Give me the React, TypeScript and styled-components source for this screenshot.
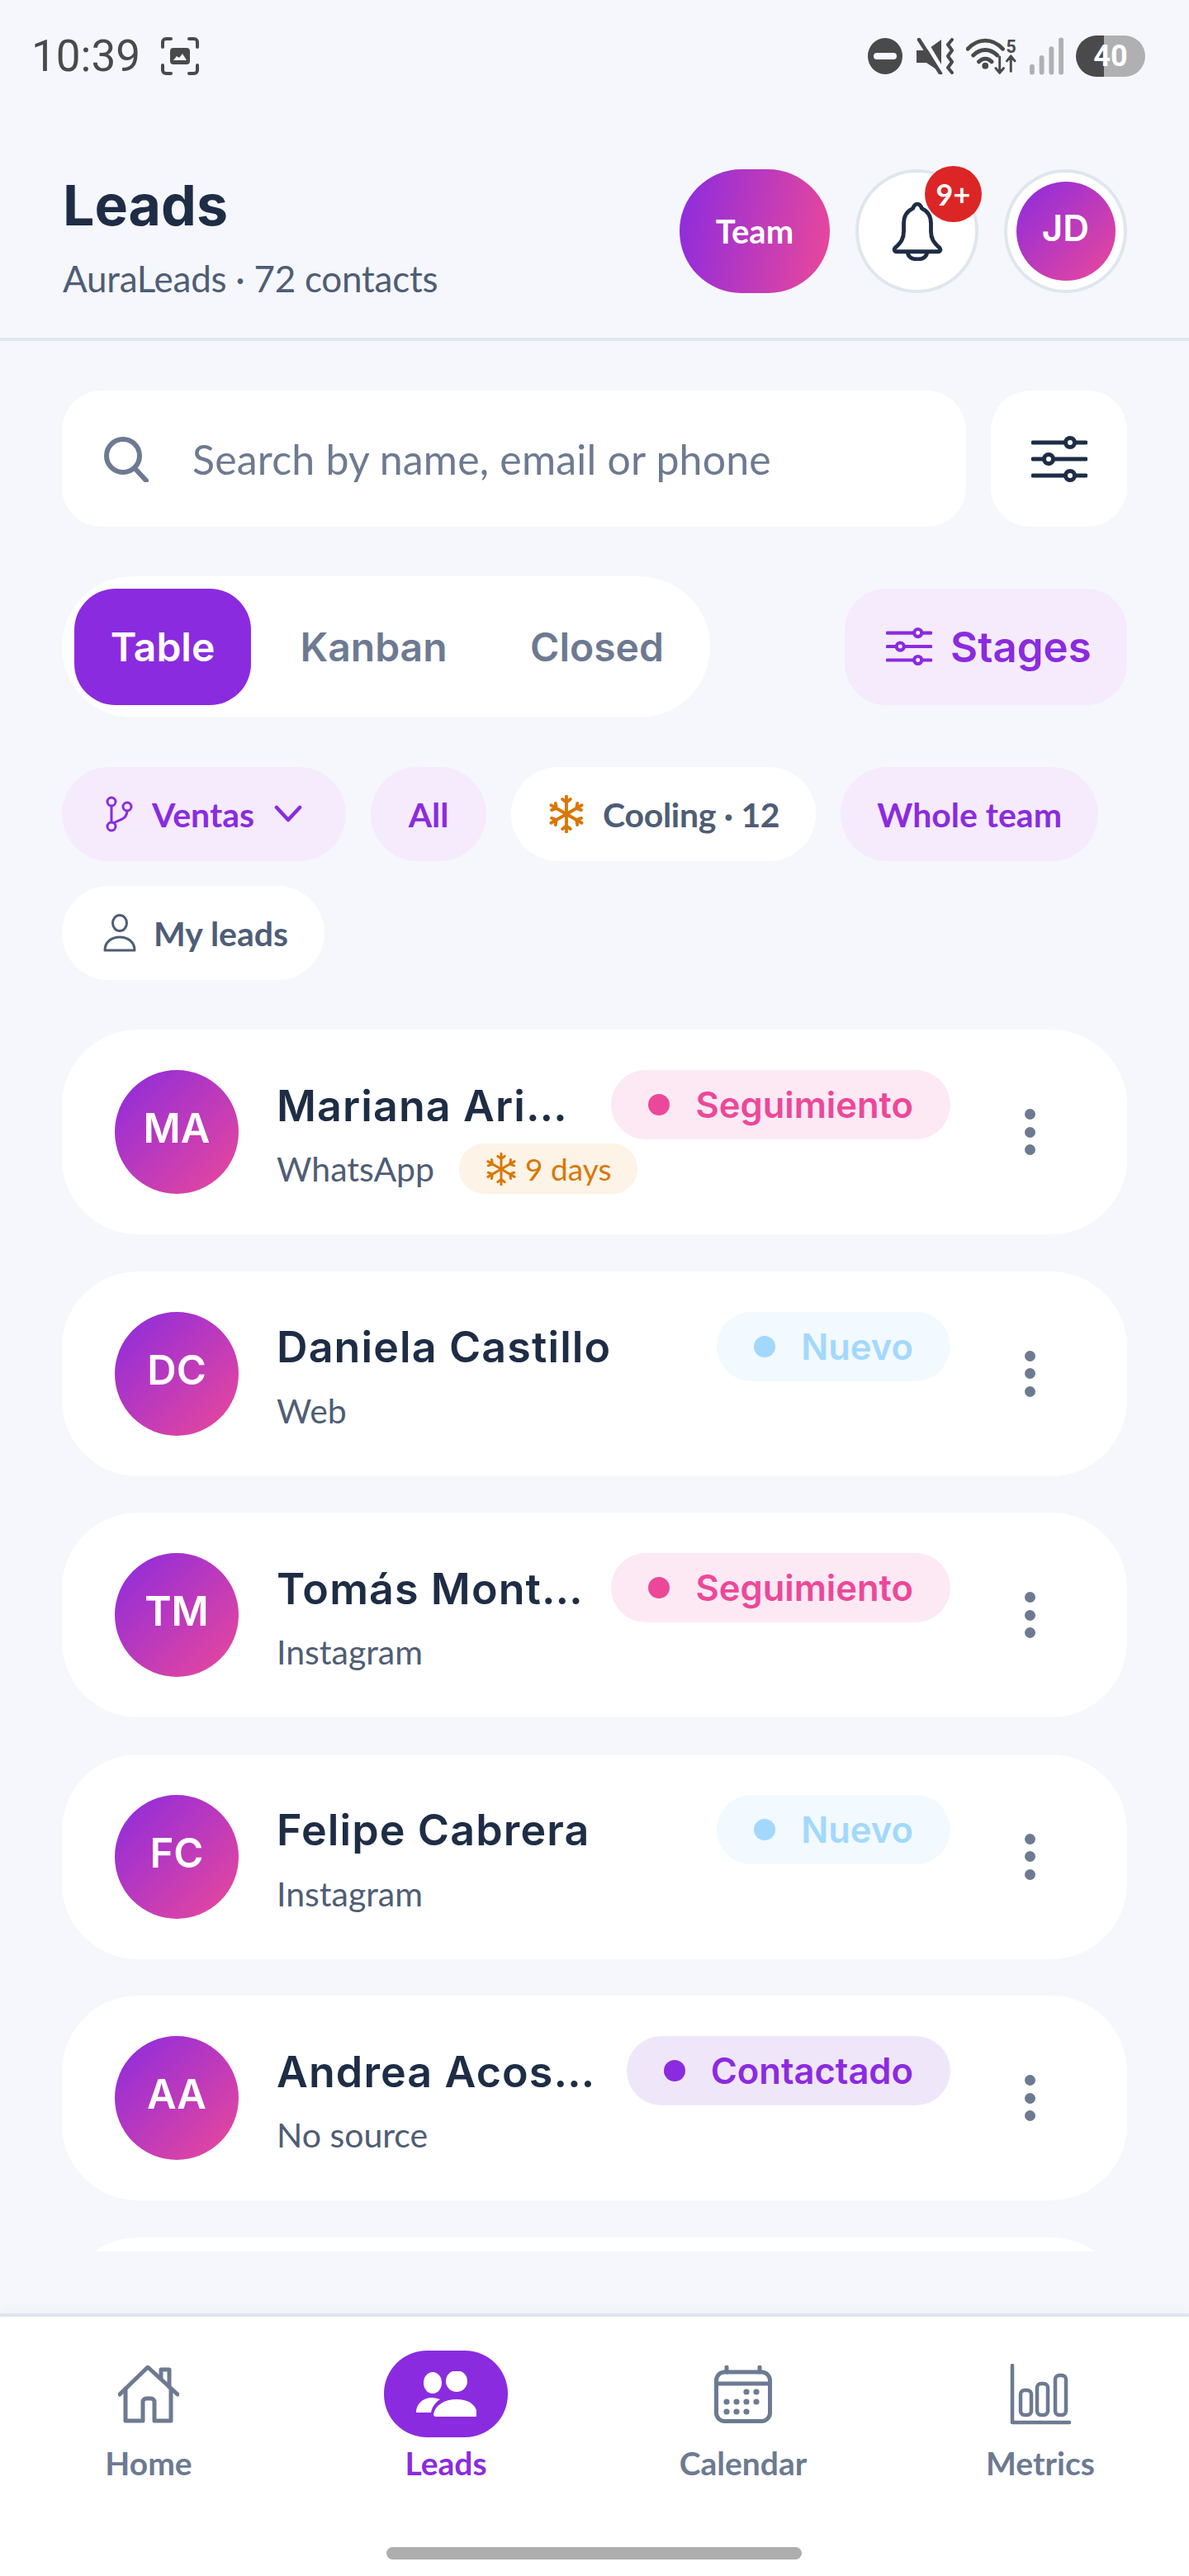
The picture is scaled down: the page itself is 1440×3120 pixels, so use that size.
import React from 'react';
import styled, { createGlobalStyle } from 'styled-components';

const PURPLE = '#8b2bdf';
const PINK = '#ec4899';
const INK = '#1e2d45';
const SLATE = '#4f5d75';
const MUTED = '#6d7a91';
const AMBER = '#d97706';
const DISPLAY = '"Inter", "Liberation Sans", sans-serif';
const BODY = '"Lato", "Liberation Sans", sans-serif';

const GlobalStyle = createGlobalStyle`
  html, body {
    margin: 0;
    padding: 0;
    background: #f5f7fc;
  }
  * {
    box-sizing: border-box;
  }
`;

const Screen = styled.div`
  width: 1440px;
  height: 3120px;
  display: flex;
  flex-direction: column;
  background: #f5f7fc;
  font-family: ${BODY};
  overflow: hidden;
`;

const StatusBar = styled.div`
  height: 136px;
  flex-shrink: 0;
  display: flex;
  align-items: center;
  justify-content: space-between;
  padding: 0 53px 0 38px;
  color: #4a4a4c;
`;

const StatusLeft = styled.div`
  display: flex;
  align-items: center;
  gap: 24px;
`;

const Clock = styled.span`
  font-family: "Roboto", sans-serif;
  font-size: 53px;
  line-height: 1;
`;

const StatusRight = styled.div`
  display: flex;
  align-items: center;
`;

const Battery = styled.div`
  width: 84px;
  height: 50px;
  margin-left: 15px;
  border-radius: 25px;
  background: linear-gradient(90deg, #4a4a4c 0 40%, #b0b0b3 40% 100%);
  color: #fff;
  font-family: "Roboto", sans-serif;
  font-weight: 700;
  font-size: 36px;
  display: flex;
  align-items: center;
  justify-content: center;
`;

const Header = styled.header`
  height: 277px;
  flex-shrink: 0;
  display: flex;
  justify-content: space-between;
  padding: 69px 75px 0 76px;
  border-bottom: 4px solid #e0e6ee;
`;

const TitleBlock = styled.div`
  padding-top: 3px;
`;

const Title = styled.h1`
  margin: 0;
  font-family: ${DISPLAY};
  font-weight: 700;
  font-size: 68px;
  line-height: 80px;
  color: ${INK};
`;

const Subtitle = styled.p`
  margin: 19px 0 0;
  font-size: 44px;
  line-height: 60px;
  letter-spacing: -0.26px;
  color: ${SLATE};
`;

const HeaderActions = styled.div`
  display: flex;
  align-items: flex-start;
  gap: 31px;
`;

const TeamButton = styled.button`
  width: 182px;
  height: 150px;
  border: 0;
  border-radius: 75px;
  background: linear-gradient(100deg, ${PURPLE}, ${PINK});
  color: #fff;
  font-family: ${BODY};
  font-weight: 700;
  font-size: 40px;
`;

const RoundButton = styled.div`
  position: relative;
  width: 149px;
  height: 150px;
  border-radius: 50%;
  border: 4px solid #e0e6ee;
  background: #fff;
  display: flex;
  align-items: center;
  justify-content: center;
`;

const CountBadge = styled.span`
  position: absolute;
  top: -8px;
  right: -8px;
  width: 69px;
  height: 68px;
  border-radius: 50%;
  background: #dc2626;
  color: #fff;
  font-size: 36px;
  font-weight: 700;
  display: flex;
  align-items: center;
  justify-content: center;
`;

const Avatar = styled.div<{ $size: number; $font: number }>`
  width: ${(p) => p.$size}px;
  height: ${(p) => p.$size}px;
  flex-shrink: 0;
  padding-bottom: 9px;
  border-radius: 50%;
  background: linear-gradient(135deg, ${PURPLE}, ${PINK});
  color: #fff;
  font-family: ${DISPLAY};
  font-weight: 600;
  font-size: ${(p) => p.$font}px;
  display: flex;
  align-items: center;
  justify-content: center;
`;

const Main = styled.main`
  flex: 1;
  min-height: 0;
  display: flex;
  flex-direction: column;
  gap: 60px;
  padding: 60px 75px 75px;
`;

const SearchRow = styled.div`
  display: flex;
  gap: 30px;
`;

const SearchBox = styled.div`
  flex: 1;
  height: 165px;
  border-radius: 48px;
  background: #fff;
  display: flex;
  align-items: center;
  gap: 52px;
  padding-left: 50px;
`;

const Placeholder = styled.span`
  font-size: 50px;
  letter-spacing: 0.2px;
  color: ${MUTED};
`;

const FilterButton = styled.div`
  width: 165px;
  height: 165px;
  border-radius: 48px;
  background: #fff;
  display: flex;
  align-items: center;
  justify-content: center;
`;

const ViewRow = styled.div`
  display: flex;
  align-items: center;
  justify-content: space-between;
`;

const Tabs = styled.div`
  width: 785px;
  height: 171px;
  padding: 15px;
  border-radius: 86px;
  background: #fff;
  display: flex;
  align-items: center;
`;

const Tab = styled.div<{ $active?: boolean; $width: number }>`
  width: ${(p) => p.$width}px;
  height: 141px;
  border-radius: 50px;
  background: ${(p) => (p.$active ? PURPLE : 'transparent')};
  color: ${(p) => (p.$active ? '#fff' : MUTED)};
  font-family: ${DISPLAY};
  font-weight: 600;
  font-size: 48px;
  display: flex;
  align-items: center;
  justify-content: center;
`;

const StagesButton = styled.div`
  width: 342px;
  height: 141px;
  border-radius: 50px;
  background: #f5ebfd;
  color: ${PURPLE};
  font-family: ${DISPLAY};
  font-weight: 600;
  font-size: 51px;
  display: flex;
  align-items: center;
  gap: 22px;
  padding-left: 50px;
`;

const ChipWrap = styled.div`
  display: flex;
  flex-wrap: wrap;
  gap: 30px;
`;

const Chip = styled.div<{ $active?: boolean }>`
  height: 114px;
  min-width: 140px;
  padding: 0 44px;
  border-radius: 57px;
  background: ${(p) => (p.$active ? '#f5ebfd' : '#fff')};
  color: ${(p) => (p.$active ? PURPLE : SLATE)};
  font-weight: 700;
  font-size: 41px;
  display: flex;
  align-items: center;
  justify-content: center;
  gap: 21px;
`;

const CoolingLabel = styled.span`
  letter-spacing: -0.3px;
`;

const LeadList = styled.div`
  flex: 1;
  min-height: 0;
  overflow: hidden;
  display: flex;
  flex-direction: column;
  gap: 44.6px;
`;

const LeadCard = styled.article`
  flex-shrink: 0;
  height: 248px;
  padding: 49px 110px 49px 64px;
  border-radius: 92px;
  background: #fff;
  display: flex;
  align-items: center;
`;

const LeadBody = styled.div`
  flex: 1;
  min-width: 0;
  margin: 0 90px 0 46px;
`;

const TopLine = styled.div`
  height: 84px;
  display: flex;
  align-items: center;
  justify-content: space-between;
`;

const LeadName = styled.div`
  padding-top: 2px;
  font-family: ${DISPLAY};
  font-weight: 600;
  font-size: 52px;
  letter-spacing: 1.1px;
  color: ${INK};
  white-space: nowrap;
`;

const stageColors = {
  follow: { bg: '#fce9f4', fg: PINK },
  fresh: { bg: '#f2f9ff', fg: '#a3d8fd' },
  contacted: { bg: '#f0e6fa', fg: PURPLE },
};

type Stage = keyof typeof stageColors;

const StageBadge = styled.div<{ $stage: Stage }>`
  flex-shrink: 0;
  height: 84px;
  padding: 0 45px;
  border-radius: 42px;
  background: ${(p) => stageColors[p.$stage].bg};
  color: ${(p) => stageColors[p.$stage].fg};
  font-family: ${DISPLAY};
  font-weight: 600;
  font-size: 43.5px;
  display: flex;
  align-items: center;
  gap: 31px;

  &::before {
    content: '';
    width: 26px;
    height: 26px;
    border-radius: 50%;
    background: currentColor;
  }
`;

const SubLine = styled.div`
  height: 61px;
  margin-top: 5px;
  display: flex;
  align-items: center;
  gap: 30px;
  font-size: 41px;
  color: ${SLATE};
`;

const CoolingTag = styled.span`
  height: 61px;
  padding: 0 32px 0 31px;
  border-radius: 31px;
  background: #fdf3e6;
  color: ${AMBER};
  font-size: 37px;
  display: flex;
  align-items: center;
  gap: 9px;
`;

const MenuDots = styled.div`
  width: 14px;
  flex-shrink: 0;
  display: flex;
  flex-direction: column;
  gap: 8.5px;

  span {
    width: 13px;
    height: 13px;
    border-radius: 50%;
    background: ${MUTED};
  }
`;

const BottomNav = styled.nav`
  position: relative;
  height: 318px;
  flex-shrink: 0;
  border-top: 4px solid #e0e6ee;
  background: #fff;
  box-shadow: 0 -6px 12px rgba(30, 45, 69, 0.025);
  display: grid;
  grid-template-columns: repeat(4, 360px);
`;

const NavItem = styled.div<{ $active?: boolean }>`
  display: flex;
  flex-direction: column;
  align-items: center;
  padding-top: 41px;
  color: ${(p) => (p.$active ? PURPLE : MUTED)};
  font-weight: 700;
  font-size: 39px;
`;

const NavIcon = styled.div<{ $active?: boolean }>`
  width: 150px;
  height: 105px;
  border-radius: 52px;
  background: ${(p) => (p.$active ? PURPLE : 'transparent')};
  display: flex;
  align-items: center;
  justify-content: center;
  margin-bottom: 8px;
`;

const HomeIndicator = styled.div`
  position: absolute;
  left: 468px;
  bottom: 20px;
  width: 503px;
  height: 15px;
  border-radius: 8px;
  background: #aeaeae;
`;

const ScreenshotIcon = () => (
  <svg width="48" height="48" viewBox="0 0 48 48" fill="none">
    <path
      d="M3 13V7a4 4 0 0 1 4-4h6M35 3h6a4 4 0 0 1 4 4v6M3 35v6a4 4 0 0 0 4 4h6M35 45h6a4 4 0 0 0 4-4v-6"
      stroke="#4a4a4c"
      strokeWidth="4"
      strokeLinecap="round"
    />
    <rect x="12" y="14" width="24" height="20" rx="4" fill="#4a4a4c" />
    <path d="M16 29l4-5 3 2 4-5 5 8z" fill="#f5f7fc" />
  </svg>
);

const DndIcon = () => (
  <svg width="42" height="44" viewBox="0 0 42 44">
    <ellipse cx="21" cy="22" rx="21" ry="22" fill="#4a4a4c" />
    <rect x="7" y="18" width="28" height="8" rx="4" fill="#f5f7fc" />
  </svg>
);

const MuteIcon = () => (
  <svg width="46" height="44" viewBox="0 0 46 44" fill="none" style={{ marginLeft: 17 }}>
    <path d="M0 15h12L30 2v40L12 30H0z" fill="#4a4a4c" />
    <path d="M8 0l24 40" stroke="#f5f7fc" strokeWidth="5" />
    <path d="M3 2l26 41" stroke="#4a4a4c" strokeWidth="4.500" strokeLinecap="round" />
    <path
      d="M43 2l-5 6 5 7-5 7 5 7-5 7 5 6"
      stroke="#4a4a4c"
      strokeWidth="4"
      strokeLinecap="round"
      strokeLinejoin="round"
    />
  </svg>
);

const WifiIcon = () => (
  <svg width="62" height="46" viewBox="0 0 64 46" fill="none" style={{ marginLeft: 14 }}>
    <path
      d="M2 14c13-14 31-14 44 0M9 22c9-9 21-9 30 0M16 30c5-5 11-5 16 0"
      stroke="#4a4a4c"
      strokeWidth="5"
      strokeLinecap="round"
    />
    <circle cx="24" cy="35" r="4" fill="#4a4a4c" />
    <path
      d="M42 24v20m-5-6l5 6 5-6M56 42V23m-5 6l5-6 5 6"
      stroke="#4a4a4c"
      strokeWidth="3"
      strokeLinecap="round"
      strokeLinejoin="round"
    />
    <text x="50" y="19" fontFamily="Roboto, sans-serif" fontWeight="700" fontSize="22" fill="#4a4a4c">5</text>
  </svg>
);

const SignalIcon = () => (
  <svg width="41" height="46" viewBox="0 0 42 46" style={{ marginLeft: 15 }}>
    <rect x="0" y="33" width="6" height="13" rx="3" fill="#b0b0b3" />
    <rect x="12" y="22" width="6" height="24" rx="3" fill="#b0b0b3" />
    <rect x="24" y="11" width="6" height="35" rx="3" fill="#b0b0b3" />
    <rect x="36" y="0" width="6" height="46" rx="3" fill="#b0b0b3" />
  </svg>
);

const BellIcon = () => (
  <svg width="62" height="72" viewBox="0 0 64 74" fill="none" stroke={INK} strokeWidth="5" strokeLinejoin="round">
    <path d="M32 3c3 0 4.500 2.500 5.500 5.500C45 12 49 18 49 27v10c0 9 3 14 11 21 1.500 2 .5 4.500-2 4.500H6c-2.500 0-3.500-2.500-2-4.500 8-7 11-12 11-21V27c0-9 4-15 11.500-18.500C27.500 5.500 29 3 32 3z" />
    <path d="M20 63c0 6 5 9 12 9s12-3 12-9" />
  </svg>
);

const SearchIcon = () => (
  <svg width="56" height="56" viewBox="0 0 56 56" fill="none" stroke={MUTED} strokeWidth="6" strokeLinecap="round">
    <circle cx="24" cy="24" r="20" />
    <path d="M39 40l13 14" />
  </svg>
);

const SlidersIcon = ({ color, size }: { color: string; size: number }) => (
  <svg width={size} height={(size * 56) / 68} viewBox="0 0 68 56" fill="none" stroke={color}>
    <path d="M2 8h64M2 28h64M2 48h64" strokeWidth="5" strokeLinecap="round" />
    <g fill="#fff" strokeWidth="5">
      <circle cx="47" cy="8" r="5.500" />
      <circle cx="21" cy="28" r="5.500" />
      <circle cx="47" cy="48" r="5.500" />
    </g>
  </svg>
);

const PipelineIcon = () => (
  <svg width="44" height="44" viewBox="0 0 44 44" fill="none" stroke={PURPLE} strokeWidth="3">
    <circle cx="16" cy="7" r="5" />
    <circle cx="16" cy="37" r="5" />
    <circle cx="35" cy="13" r="5" />
    <path d="M16 12v20M35 18c0 6-3 9-8 11l-9 4" />
  </svg>
);

const ChevronIcon = () => (
  <svg width="34" height="22" viewBox="0 0 34 22" fill="none" stroke={PURPLE} strokeWidth="4.500" strokeLinecap="round" strokeLinejoin="round" style={{ margin: '0 9px 0 3px' }}>
    <path d="M3 3l14 15L31 3" />
  </svg>
);

// six arms, each with one small barb close to its tip
const FlakeIcon = ({ size, weight }: { size: number; weight: number }) => (
  <svg width={size} height={size} viewBox="0 0 24 24" fill="none" stroke={AMBER} strokeWidth={weight} strokeLinecap="round" strokeLinejoin="round">
    {[0, 60, 120, 180, 240, 300].map((angle) => (
      <path key={angle} transform={`rotate(${angle} 12 12)`} d="M12 12V.8M9.500 2.600L12 4.600l2.500-2" />
    ))}
  </svg>
);

const PersonIcon = () => (
  <svg width="46" height="46" viewBox="0 0 46 46" fill="none" stroke={SLATE} strokeWidth="3" strokeLinejoin="round">
    <ellipse cx="26" cy="11" rx="8.500" ry="9.500" />
    <path d="M8 44c0-10 8-16 18-16s18 6 18 16z" />
  </svg>
);

const HomeIcon = () => (
  <svg width="74" height="70" viewBox="0 0 74 70" fill="none" stroke={MUTED} strokeWidth="5" strokeLinecap="round" strokeLinejoin="round">
    <path d="M2 35L36 2l36 33" />
    <path d="M52 16V5h10v21" />
    <path d="M9 28v39h21V44a4 4 0 0 1 4-4h6a4 4 0 0 1 4 4v23h20V28" />
  </svg>
);

const PeopleIcon = () => (
  <svg width="74" height="56" viewBox="0 0 74 56" fill="#fff">
    <ellipse cx="21" cy="14" rx="11" ry="13" />
    <ellipse cx="50" cy="12" rx="13" ry="13" />
    <path d="M1 50c0-11 9-18 19-18 3 0 7 1 10 2-6 4-10 10-11 16z" />
    <path d="M25 55c-2 0-3-1-3-3 2-11 13-18 28-18s24 7 25 18c0 2-1 3-3 3z" />
  </svg>
);

const CalendarIcon = () => (
  <svg width="70" height="70" viewBox="0 0 70 70" fill="none">
    <rect x="2.500" y="8" width="65" height="59.500" rx="10" stroke={MUTED} strokeWidth="5" />
    <path d="M2 22h66M15 2v6M55 2v6" stroke={MUTED} strokeWidth="5" strokeLinecap="round" />
    <g fill={MUTED}>
      <circle cx="39" cy="32" r="3.600" /><circle cx="51" cy="32" r="3.600" />
      <circle cx="15" cy="44" r="3.600" /><circle cx="27" cy="44" r="3.600" />
      <circle cx="39" cy="44" r="3.600" /><circle cx="51" cy="44" r="3.600" />
      <circle cx="15" cy="56" r="3.600" /><circle cx="27" cy="56" r="3.600" /><circle cx="39" cy="56" r="3.600" />
    </g>
  </svg>
);

const MetricsIcon = () => (
  <svg width="74" height="74" viewBox="0 0 74 74" fill="none" stroke={MUTED} strokeWidth="4.500" strokeLinecap="round" strokeLinejoin="round">
    <path d="M3 2v69h69" />
    <rect x="13" y="32" width="13" height="30" rx="5" />
    <rect x="33" y="24" width="13" height="38" rx="5" />
    <rect x="55" y="14" width="13" height="48" rx="5" />
  </svg>
);

interface Lead {
  initials: string;
  name: string;
  source: string;
  stage: Stage;
  stageLabel: string;
  cooling?: string;
}

const leads: Lead[] = [
  { initials: 'MA', name: 'Mariana Ari…', source: 'WhatsApp', stage: 'follow', stageLabel: 'Seguimiento', cooling: '9 days' },
  { initials: 'DC', name: 'Daniela Castillo', source: 'Web', stage: 'fresh', stageLabel: 'Nuevo' },
  { initials: 'TM', name: 'Tomás Mont…', source: 'Instagram', stage: 'follow', stageLabel: 'Seguimiento' },
  { initials: 'FC', name: 'Felipe Cabrera', source: 'Instagram', stage: 'fresh', stageLabel: 'Nuevo' },
  { initials: 'AA', name: 'Andrea Acos…', source: 'No source', stage: 'contacted', stageLabel: 'Contactado' },
];

const navItems = [
  { label: 'Home', icon: <HomeIcon /> },
  { label: 'Leads', icon: <PeopleIcon />, active: true },
  { label: 'Calendar', icon: <CalendarIcon /> },
  { label: 'Metrics', icon: <MetricsIcon /> },
];

const App: React.FC = () => (
  <Screen>
    <GlobalStyle />
    <StatusBar>
      <StatusLeft>
        <Clock>10:39</Clock>
        <ScreenshotIcon />
      </StatusLeft>
      <StatusRight>
        <DndIcon />
        <MuteIcon />
        <WifiIcon />
        <SignalIcon />
        <Battery>40</Battery>
      </StatusRight>
    </StatusBar>

    <Header>
      <TitleBlock>
        <Title>Leads</Title>
        <Subtitle>AuraLeads · 72 contacts</Subtitle>
      </TitleBlock>
      <HeaderActions>
        <TeamButton>Team</TeamButton>
        <RoundButton>
          <BellIcon />
          <CountBadge>9+</CountBadge>
        </RoundButton>
        <RoundButton>
          <Avatar $size={120} $font={44}>JD</Avatar>
        </RoundButton>
      </HeaderActions>
    </Header>

    <Main>
      <SearchRow>
        <SearchBox>
          <SearchIcon />
          <Placeholder>Search by name, email or phone</Placeholder>
        </SearchBox>
        <FilterButton>
          <SlidersIcon color={INK} size={68} />
        </FilterButton>
      </SearchRow>

      <ViewRow>
        <Tabs>
          <Tab $active $width={214}>Table</Tab>
          <Tab $width={297}>Kanban</Tab>
          <Tab $width={244}>Closed</Tab>
        </Tabs>
        <StagesButton>
          <SlidersIcon color={PURPLE} size={56} />
          Stages
        </StagesButton>
      </ViewRow>

      <ChipWrap>
        <Chip $active>
          <PipelineIcon />
          Ventas
          <ChevronIcon />
        </Chip>
        <Chip $active>All</Chip>
        <Chip>
          <FlakeIcon size={46} weight={2} />
          <CoolingLabel>Cooling · 12</CoolingLabel>
        </Chip>
        <Chip $active>Whole team</Chip>
        <Chip>
          <PersonIcon />
          My leads
        </Chip>
      </ChipWrap>

      <LeadList>
        {leads.map((lead) => (
          <LeadCard key={lead.initials}>
            <Avatar $size={150} $font={49}>{lead.initials}</Avatar>
            <LeadBody>
              <TopLine>
                <LeadName>{lead.name}</LeadName>
                <StageBadge $stage={lead.stage}>{lead.stageLabel}</StageBadge>
              </TopLine>
              <SubLine>
                {lead.source}
                {lead.cooling && (
                  <CoolingTag>
                    <FlakeIcon size={40} weight={1.8} />
                    {lead.cooling}
                  </CoolingTag>
                )}
              </SubLine>
            </LeadBody>
            <MenuDots>
              <span />
              <span />
              <span />
            </MenuDots>
          </LeadCard>
        ))}
        {/* next row only peeks in above the clip edge */}
        <LeadCard />
      </LeadList>
    </Main>

    <BottomNav>
      {navItems.map((item) => (
        <NavItem key={item.label} $active={item.active}>
          <NavIcon $active={item.active}>{item.icon}</NavIcon>
          {item.label}
        </NavItem>
      ))}
      <HomeIndicator />
    </BottomNav>
  </Screen>
);

export default App;
